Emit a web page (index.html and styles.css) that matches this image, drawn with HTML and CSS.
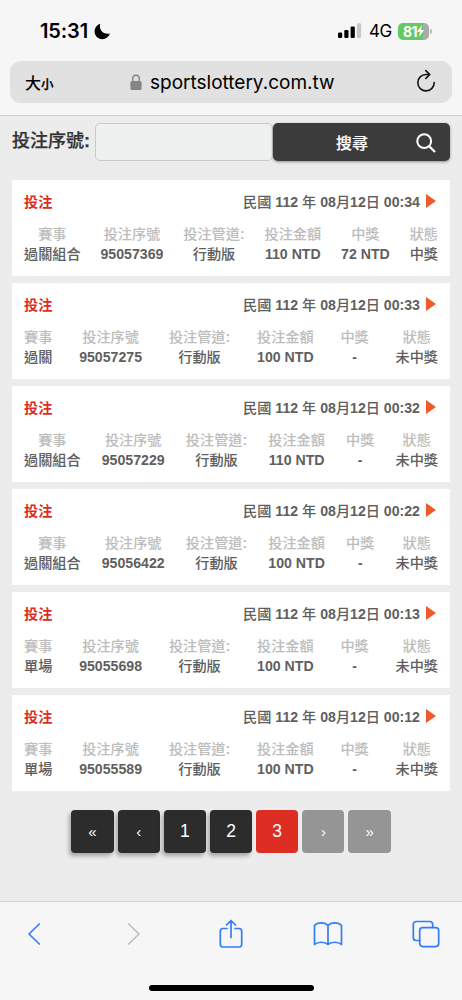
FILE: index.html
```html
<!DOCTYPE html>
<html lang="zh-Hant">
<head>
  <meta charset="UTF-8">
  <meta name="viewport" content="width=device-width, initial-scale=1.0">
  <title>投注紀錄</title>
  <link rel="stylesheet" href="styles.css">
</head>
<body>

  <header class="browser-top">
    <div class="status-bar">
      <span class="time">15:31</span>
      <svg class="moon" width="17" height="17" viewBox="0 0 17 17"><path d="M6.200 .8C4.600 6.800 9.200 12 16 10.500C14.400 14.200 11.600 16.200 8.300 16.200C4 16.200 .6 12.800 .6 8.600C.6 5 2.800 2 6.200 .8Z" fill="#000"/></svg>
      <svg class="signal" width="24" height="16" viewBox="0 0 24 16">
        <rect x="0" y="9.5" width="4.2" height="5.5" rx="1.2"/>
        <rect x="6.3" y="7" width="4.2" height="8" rx="1.2"/>
        <rect x="12.6" y="3.5" width="4.2" height="11.5" rx="1.2"/>
        <rect x="18.9" y="0.3" width="4.2" height="14.7" rx="1.2" fill="#c8c8c8"/>
      </svg>
      <span class="network">4G</span>
      <span class="battery">81<svg width="7" height="12" viewBox="0 0 7 12"><path d="M5 0L0 6.7H3L2 12L7 5H4Z" fill="#fff"/></svg></span>
      <span class="battery-cap"></span>
    </div>
    <div class="address-bar">
      <span class="text-size">大<small>小</small></span>
      <svg class="lock" width="12" height="17" viewBox="0 0 12 17"><path d="M2.8 8V4.6C2.8 .2 9.2 .2 9.2 4.6V8" fill="none" stroke="#858587" stroke-width="1.4"/><rect x=".4" y="7" width="11.2" height="9" rx="1.6" fill="#858587"/></svg>
      <span class="url">sportslottery.com.tw</span>
      <svg class="reload" width="20" height="24" viewBox="0 0 20 24" fill="none" stroke="#111" stroke-width="1.6" stroke-linecap="round" stroke-linejoin="round"><path d="M13.500 5.500H10A8.200 8.200 0 1 0 18.200 13.500M9.800 1.600L13.800 5.500L9.800 9.400"/></svg>
    </div>
  </header>

  <main>
    <form class="search-form">
      <label for="serial">投注序號<b>:</b></label>
      <input type="text" id="serial" name="serial">
      <button type="button"><span>搜尋</span>
        <svg width="20" height="20" viewBox="0 0 20 20" fill="none" stroke="#fff" stroke-width="2"><circle cx="8.2" cy="8.2" r="6.9"/><path d="M13 13L19 19" stroke-width="2.3"/></svg>
      </button>
    </form>

    <div id="betList" class="bet-list"></div>

    <nav class="pagination">
      <a class="arrow">«</a>
      <a class="arrow">‹</a>
      <a>1</a>
      <a>2</a>
      <a class="active">3</a>
      <a class="arrow disabled">›</a>
      <a class="arrow disabled">»</a>
    </nav>
  </main>

  <footer class="browser-bottom">
    <div class="toolbar">
      <svg width="30" height="24" viewBox="0 0 14 24"><path d="M12.300 2L2 12L12.300 22"/></svg>
      <svg class="off" width="30" height="24" viewBox="-2 0 14 24"><path d="M1.700 2L12 12L1.700 22"/></svg>
      <svg width="30" height="30" viewBox="-1 0 26 30"><path d="M9 9.500H5A2.700 2.700 0 0 0 2.300 12.200V25.300A2.700 2.700 0 0 0 5 28H21A2.700 2.700 0 0 0 23.700 25.300V12.200A2.700 2.700 0 0 0 21 9.500H17M13 18.500V1.800M8.500 6L13 1.500L17.500 6"/></svg>
      <svg width="30" height="26" viewBox="0 0 30 26"><path d="M15 4.500C12 1 4.500 1 1.500 4.500V23.500C4.500 20.500 12 20.500 15 23.500C18 20.500 25.500 20.500 28.500 23.500V4.500C25.500 1 18 1 15 4.500V23.500"/></svg>
      <svg width="30" height="28" viewBox="0 0 28 28"><rect x="7.700" y="7.600" width="19" height="19" rx="3"/><path d="M7.500 20.500H4.300A3 3 0 0 1 1.300 17.500V4.500A3 3 0 0 1 4.300 1.500H17.700A3 3 0 0 1 20.700 4.500V7.300"/></svg>
    </div>
    <div class="home-indicator"></div>
  </footer>

  <script src="script.js"></script>
</body>
</html>
```
FILE: styles.css
```css
* {
    box-sizing: border-box;
}

body {
    margin: 0;
    height: 1000px;
    display: flex;
    flex-direction: column;
    overflow: hidden;
    background-color: #ececec;
    font-family: "Liberation Sans", "Noto Sans CJK TC", sans-serif;
    color: #333;
}

.browser-top {
    height: 116px;
    background-color: #f6f6f6;
    border-bottom: 1px solid #d2d2d2;
    font-family: Inter, "Noto Sans CJK TC", sans-serif;
    color: #000;
}

.status-bar {
    height: 61px;
    padding: 1px 30px 0 40px;
    display: flex;
    align-items: center;
}

.time {
    width: 50px;
    font-size: 20px;
    font-weight: 600;
    letter-spacing: -0.1px;
}

.moon {
    margin-left: 4px;
}

.signal {
    margin-left: auto;
}

.network {
    margin-left: 7px;
    width: 23px;
    font-size: 17px;
    letter-spacing: -0.6px;
    white-space: nowrap;
}

.battery {
    margin-left: 6px;
    width: 31px;
    height: 17px;
    border-radius: 5px;
    background: linear-gradient(90deg, #65c765 81%, #aaa 81%);
    color: #fff;
    font-size: 14px;
    font-weight: 700;
    letter-spacing: -0.5px;
    display: flex;
    align-items: center;
    justify-content: center;
}

.battery-cap {
    width: 2px;
    height: 5px;
    margin-left: 1px;
    border-radius: 0 2px 2px 0;
    background-color: #b5b5b5;
}

.address-bar {
    height: 42px;
    margin: 0 10px;
    padding: 0 16px 0 15px;
    border-radius: 11px;
    background-color: #e1e1e1;
    display: flex;
    align-items: center;
}

.text-size {
    width: 105px;
    font-size: 16px;
    font-weight: 500;
}

.text-size small {
    font-size: 12.5px;
    -webkit-text-stroke: 0.3px;
}

.url {
    margin-left: 8px;
    font-size: 19px;
    white-space: nowrap;
}

.reload {
    margin-left: auto;
    margin-top: -3px;
}

main {
    flex: 1;
    padding: 7px 12px 0;
}

.search-form {
    display: flex;
    height: 38px;
    margin-bottom: 19px;
}

.search-form label {
    width: 83px;
    font-size: 18px;
    line-height: 37px;
    font-weight: 500;
    white-space: nowrap;
    -webkit-text-stroke: 0.25px;
}

.search-form input {
    width: 178px;
    border: 1px solid #c9caca;
    border-radius: 5px;
    background-color: #eff1f1;
}

.search-form button {
    flex: 1;
    padding: 0 14px 0 63px;
    border: none;
    border-radius: 5px;
    background-color: #3b3b3b;
    box-shadow: 0 1px 3px rgba(0, 0, 0, 0.4);
    color: #fff;
    font-family: inherit;
    font-size: 16px;
    font-weight: 500;
    -webkit-text-stroke: 0.15px;
    display: flex;
    align-items: center;
    justify-content: space-between;
}

.search-form button svg {
    margin-top: 2px;
}

.bet-list {
    display: flex;
    flex-direction: column;
    gap: 7px;
}

.bet {
    height: 96px;
    padding: 12px 12px 0;
    background-color: #fff;
    font-size: 14.15px;
    line-height: 20px;
    color: #5f5f5f;
    -webkit-text-stroke: 0.08px;
}

.bet b {
    font-weight: 700;
    -webkit-text-stroke: 0;
}

.bet-head {
    display: flex;
    font-weight: 500;
}

.bet-type {
    color: #dd2c22;
    font-weight: 700;
    -webkit-text-stroke: 0;
}

.bet-date {
    margin-left: auto;
    white-space: pre;
}

.bet-arrow {
    align-self: center;
    margin: -2px 2px 0 6px;
    border-left: 10px solid #ef5a28;
    border-top: 7px solid transparent;
    border-bottom: 7px solid transparent;
}

.bet-info {
    margin-top: 12px;
    display: flex;
    justify-content: space-between;
    text-align: center;
    font-weight: 500;
    white-space: nowrap;
}

.bet-info .label {
    color: #bdbdbd;
}

.pagination {
    margin-top: 19px;
    display: flex;
    justify-content: center;
    gap: 4px;
}

.pagination a {
    width: 42.2px;
    height: 42.5px;
    border-radius: 4px;
    background-color: #2c2c2c;
    box-shadow: -2px 3px 4px rgba(0, 0, 0, 0.3);
    color: #fff;
    font-size: 17.5px;
    line-height: 43px;
    text-align: center;
}

.pagination .arrow {
    font-size: 15px;
}

.pagination .active {
    background-color: #dc2e22;
    box-shadow: none;
}

.pagination .disabled {
    background-color: #959595;
    box-shadow: none;
}

.browser-bottom {
    height: 99px;
    border-top: 1px solid #d8d8d8;
    background-color: #f6f6f6;
}

.toolbar {
    height: 63px;
    padding: 0 21px 0 19px;
    display: flex;
    align-items: center;
    justify-content: space-between;
}

.toolbar svg {
    fill: none;
    stroke: #337cf6;
    stroke-width: 1.7;
    stroke-linecap: round;
    stroke-linejoin: round;
}

.toolbar .off {
    stroke: #bfbfbf;
}

.home-indicator {
    width: 165px;
    height: 6px;
    margin: 20px auto 0;
    border-radius: 3px;
    background-color: #000;
}
```
FILE: script.js
```js
const bets = [
  { time: '00:34', game: '過關組合', serial: '95057369', amount: '110 NTD', prize: '72 NTD', status: '中獎' },
  { time: '00:33', game: '過關', serial: '95057275', amount: '100 NTD', prize: '-', status: '未中獎' },
  { time: '00:32', game: '過關組合', serial: '95057229', amount: '110 NTD', prize: '-', status: '未中獎' },
  { time: '00:22', game: '過關組合', serial: '95056422', amount: '100 NTD', prize: '-', status: '未中獎' },
  { time: '00:13', game: '單場', serial: '95055698', amount: '100 NTD', prize: '-', status: '未中獎' },
  { time: '00:12', game: '單場', serial: '95055589', amount: '100 NTD', prize: '-', status: '未中獎' }
];

const list = document.getElementById('betList');
bets.forEach(bet => {
  const card = document.createElement('div');
  card.className = 'bet';
  card.innerHTML = `
    <div class="bet-head">
      <span class="bet-type">投注</span>
      <span class="bet-date">民國<b> 112 </b>年<b> 08</b>月<b>12</b>日<b> ${bet.time}</b></span>
      <span class="bet-arrow"></span>
    </div>
    <div class="bet-info">
      <div><div class="label">賽事</div>${bet.game}</div>
      <div><div class="label">投注序號</div><b>${bet.serial}</b></div>
      <div><div class="label">投注管道<b>:</b></div>行動版</div>
      <div><div class="label">投注金額</div><b>${bet.amount}</b></div>
      <div><div class="label">中獎</div><b>${bet.prize}</b></div>
      <div><div class="label">狀態</div>${bet.status}</div>
    </div>
  `;
  list.appendChild(card);
});
```
